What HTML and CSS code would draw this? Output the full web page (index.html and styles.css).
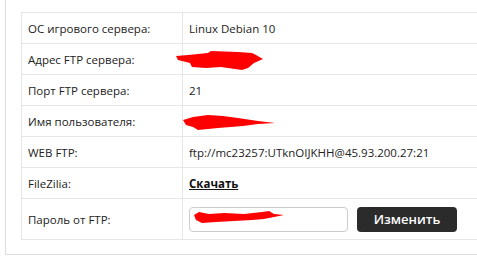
FILE: index.html
```html
<!DOCTYPE html>
<html lang="ru">
<head>
    <meta charset="UTF-8">
    <title>FTP</title>
    <link rel="stylesheet" href="styles.css">
</head>
<body>
    <div class="panel">
        <table class="info">
            <tr>
                <td class="label">ОС игрового сервера:</td>
                <td>Linux Debian 10</td>
            </tr>
            <tr>
                <td class="label">Адрес FTP сервера:</td>
                <td></td>
            </tr>
            <tr>
                <td class="label">Порт FTP сервера:</td>
                <td>21</td>
            </tr>
            <tr>
                <td class="label">Имя пользователя:</td>
                <td></td>
            </tr>
            <tr>
                <td class="label">WEB FTP:</td>
                <td>ftp://mc23257:UTknOIJKHH@45.93.200.27:21</td>
            </tr>
            <tr>
                <td class="label">FileZilia:</td>
                <td><a href="#" class="download">Скачать</a></td>
            </tr>
            <tr class="tall">
                <td class="label">Пароль от FTP:</td>
                <td>
                    <div class="pass-row">
                        <input type="text" class="pass-input">
                        <button class="change-btn">Изменить</button>
                    </div>
                </td>
            </tr>
        </table>

        <!-- закрашенные данные -->
        <svg class="scribble s1" width="90" height="20" viewBox="0 0 90 20">
            <path d="M0 5 L12 4 L32 2 L35 0 L62 1 L76 2 L80 4 L87 8 L78 12 L72 17 L66 19 L45 16 L30 17 L16 16 L14 12 L2 9 Z" fill="#ff0000"/>
        </svg>
        <svg class="scribble s2" width="94" height="16" viewBox="0 0 94 16">
            <path d="M0 5 L10 2 L25 0 L40 1 L55 3 L75 6 L92 8 L75 9 L60 11 L35 13 L15 15 L10 12 L3 10 Z" fill="#ff0000"/>
        </svg>
        <svg class="scribble s3" width="92" height="14" viewBox="0 0 92 14">
            <path d="M0 4 L5 1 L15 3 L30 2 L50 3 L68 1 L75 0 L80 3 L90 4 L80 6 L70 8 L58 9 L40 10 L22 11 L8 12 L2 9 Z" fill="#ff0000"/>
        </svg>
    </div>
</body>
</html>
```

FILE: styles.css
```css
body {
    margin: 0;
    overflow: hidden;
    font-family: 'Open Sans', 'Noto Sans', sans-serif;
    background: #fff;
}

.panel {
    position: relative;
    width: 540px;
    margin-left: 5px;
    padding: 12px 15px 14px 15px;
    border: 1px solid #dddddd;
    border-top: none;
}

.info {
    width: 100%;
    border-collapse: collapse;
    font-size: 11.5px;
    color: #222;
}

.info td {
    height: 30px;
    padding: 0 6px;
    border: 1px solid #e6e6e6;
    vertical-align: middle;
}

.info td.label {
    width: 148px;
}

.info tr.tall td {
    height: 40px;
}

.download {
    color: #111;
    font-weight: bold;
    text-decoration: underline;
}

.pass-row {
    display: flex;
    align-items: center;
    gap: 9px;
}

.pass-input {
    width: 159px;
    height: 25px;
    box-sizing: border-box;
    border: 1px solid #cccccc;
    border-radius: 4px;
    margin: 0;
}

.change-btn {
    width: 100px;
    height: 25px;
    border: none;
    border-radius: 4px;
    background: #2b2b2b;
    color: #fff;
    font-family: 'Open Sans', 'Noto Sans', sans-serif;
    font-size: 13px;
    font-weight: 600;
}

.scribble {
    position: absolute;
}

.s1 {
    left: 170px;
    top: 51px;
}

.s2 {
    left: 177px;
    top: 115px;
}

.s3 {
    left: 188px;
    top: 211px;
}
```
